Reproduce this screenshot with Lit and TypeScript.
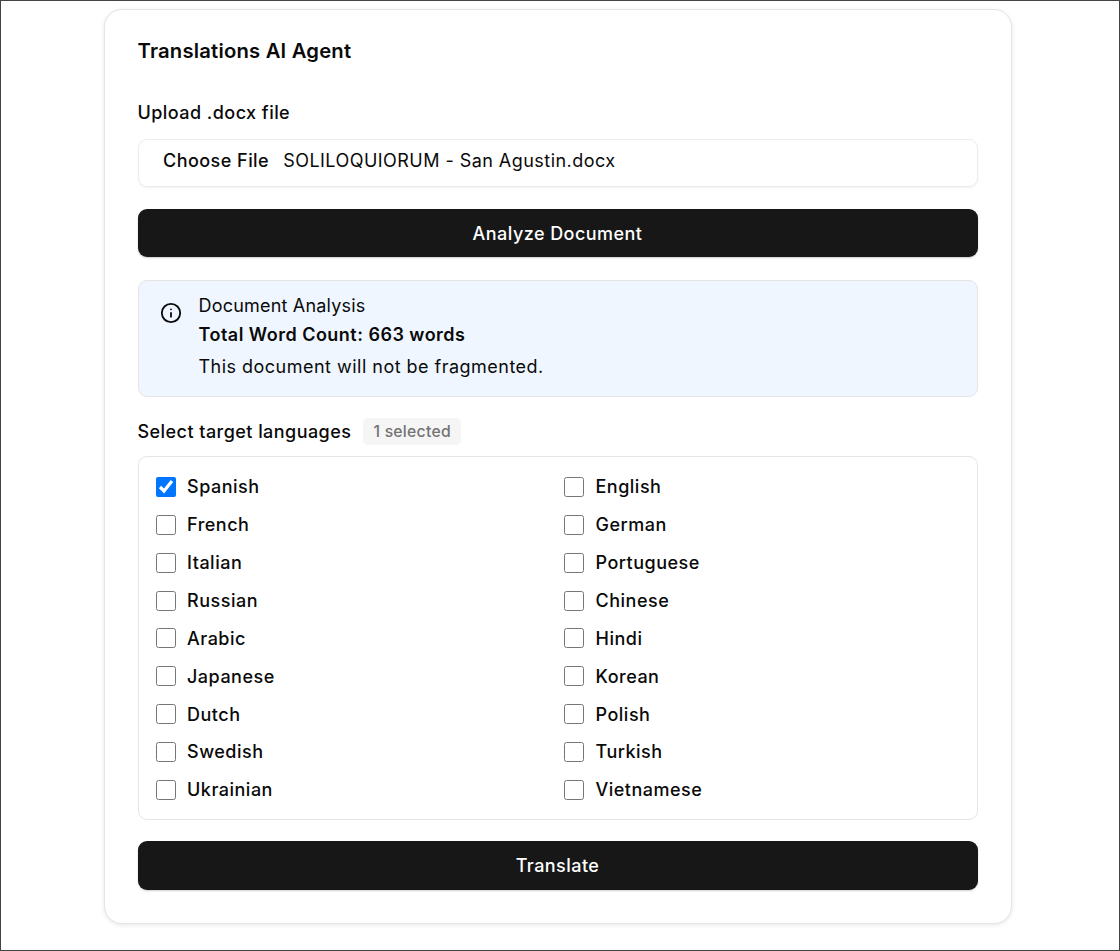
import { LitElement, html, css } from "lit";
import { customElement } from "lit/decorators.js";

const LANGS = ["Spanish","English","French","German","Italian","Portuguese","Russian","Chinese","Arabic","Hindi","Japanese","Korean","Dutch","Polish","Swedish","Turkish","Ukrainian","Vietnamese"];

@customElement("app-root")
export class AppRoot extends LitElement {
  static styles = css`
    :host { display: block; box-sizing: border-box; height: 951px; border: 1.5px solid #444; background: #fff; font-family: Inter, "Liberation Sans", sans-serif; color: #0a0a0a; overflow: hidden; }
    * { box-sizing: border-box; }
    .card { width: 908px; height: 915px; margin: 7.5px 0 0 102.5px; border: 1px solid #e5e5e5; border-radius: 18px; padding: 23px 33px; box-shadow: 0 1px 4px rgba(0,0,0,.1); display: flex; flex-direction: column; background: #fff; }
    h1 { margin: 0; font-size: 20.25px; line-height: 36px; font-weight: 600; letter-spacing: .2px; }
    .label { font-size: 18px; line-height: 26px; font-weight: 500; letter-spacing: .45px; }
    .upload-label { margin-top: 31px; }
    .file { margin-top: 13px; height: 48.6px; border: 1px solid #ececec; border-radius: 9px; box-shadow: 0 1px 2px rgba(0,0,0,.06); display: flex; align-items: center; padding: 0 24.5px 5px; font-size: 18px; gap: 14px; letter-spacing: .46px; }
    .file b { font-weight: 500; }
    .btn { height: 49px; border: none; border-radius: 9px; background: #171717; color: #fff; font: 500 18px Inter, sans-serif; letter-spacing: .45px; display: flex; align-items: center; justify-content: center; box-shadow: 0 1px 2px rgba(0,0,0,.2); }
    .analyze { margin-top: 21.9px; height: 48.2px; }
    .alert { margin-top: 22.5px; height: 117.6px; border: 1px solid #e5e5e5; border-radius: 9px; background: #eff6ff; padding: 12px 21px; display: flex; gap: 17px; font-size: 18px; }
    .alert svg { flex: none; margin-top: 9px; }
    .t1 { line-height: 26px; font-weight: 400; letter-spacing: .2px; }
    .t2 { line-height: 32px; font-weight: 600; letter-spacing: .48px; }
    .t3 { line-height: 32px; letter-spacing: .48px; }
    .sel { margin-top: 21.2px; display: flex; align-items: center; gap: 12px; height: 27px; }
    .badge { font-size: 15.75px; color: #737373; background: #f5f5f5; border-radius: 5px; height: 27px; padding: 0 10px; display: flex; align-items: center; font-weight: 500; letter-spacing: .25px; }
    .box { margin-top: 11px; height: 363.4px; border: 1px solid #e5e5e5; border-radius: 9px; padding: 10.6px 16px 0 17px; display: grid; grid-template-columns: 408.5px 1fr; grid-auto-rows: 37.85px; }
    .row { display: flex; align-items: center; gap: 11.5px; font-size: 18px; font-weight: 500; letter-spacing: .5px; }
    .row input { width: 20px; height: 20px; margin: 0; flex: none; }
    .translate { margin-top: 21px; }
  `;

  render() {
    return html`
      <div class="card">
        <h1>Translations AI Agent</h1>
        <div class="label upload-label">Upload .docx file</div>
        <div class="file"><b>Choose File</b><span>SOLILOQUIORUM - San Agustin.docx</span></div>
        <div class="btn analyze">Analyze Document</div>
        <div class="alert">
          <svg width="22" height="22" viewBox="0 0 24 24" fill="none" stroke="#0a0a0a" stroke-width="2" stroke-linecap="round" stroke-linejoin="round"><circle cx="12" cy="12" r="10"/><path d="M12 16v-4"/><path d="M12 8h.01"/></svg>
          <div>
            <div class="t1">Document Analysis</div>
            <div class="t2">Total Word Count: 663 words</div>
            <div class="t3">This document will not be fragmented.</div>
          </div>
        </div>
        <div class="sel"><span class="label">Select target languages</span><span class="badge">1 selected</span></div>
        <div class="box">
          ${LANGS.map((l, i) => html`<label class="row"><input type="checkbox" .checked=${i === 0} />${l}</label>`)}
        </div>
        <div class="btn translate">Translate</div>
      </div>
    `;
  }
}
